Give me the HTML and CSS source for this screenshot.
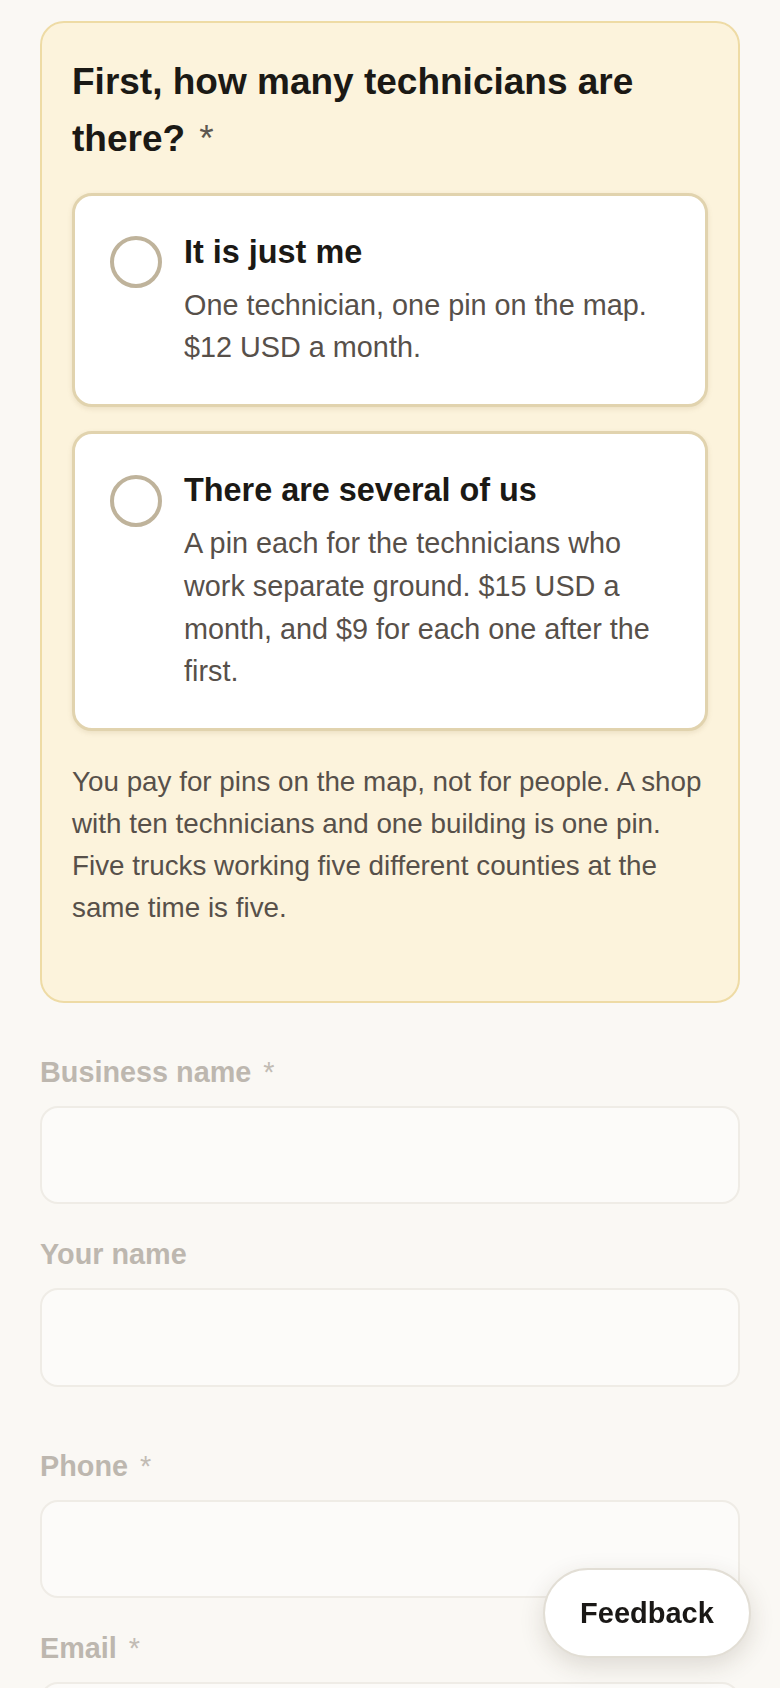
FILE: index.html
```html
<!DOCTYPE html>
<html lang="en">
<head>
<meta charset="utf-8">
<title>Sign up</title>
<link rel="stylesheet" href="styles.css">
</head>
<body>
<main class="page">
  <section class="question">
    <h2 class="q-title">First, how many technicians are there? <span class="req">*</span></h2>
    <div class="options">
      <label class="option">
        <span class="radio"></span>
        <span class="opt-text">
          <span class="opt-title">It is just me</span>
          <span class="opt-desc">One technician, one pin on the map. $12 USD a month.</span>
        </span>
      </label>
      <label class="option">
        <span class="radio"></span>
        <span class="opt-text">
          <span class="opt-title">There are several of us</span>
          <span class="opt-desc">A pin each for the technicians who work separate ground. $15 USD a month, and $9 for each one after the first.</span>
        </span>
      </label>
    </div>
    <p class="help">You pay for pins on the map, not for people. A shop with ten technicians and one building is one pin. Five trucks working five different counties at the same time is five.</p>
  </section>

  <div class="field field-first">
    <label class="label">Business name <span class="req-l">*</span></label>
    <input class="input" type="text">
  </div>
  <div class="field">
    <label class="label">Your name</label>
    <input class="input" type="text">
  </div>
  <div class="field field-spaced">
    <label class="label">Phone <span class="req-l">*</span></label>
    <input class="input" type="text">
  </div>
  <div class="field">
    <label class="label">Email <span class="req-l">*</span></label>
    <input class="input" type="text">
  </div>
</main>
<button class="feedback" type="button">Feedback</button>
</body>
</html>
```

FILE: styles.css
```css
html, body {
  margin: 0;
  background: #faf8f4;
  font-family: "Liberation Sans", Arial, sans-serif;
}

.page {
  padding: 20.5px 40px 60px;
}

.question {
  background: #fcf3dc;
  border: 2px solid #eedba5;
  border-radius: 24px;
  padding: 30px 30px 72px;
}

.q-title {
  margin: 0;
  font-size: 37px;
  line-height: 57px;
  font-weight: 700;
  color: #1b1915;
}

.req {
  font-weight: 400;
  color: #5e5851;
  margin-left: 4px;
}

.options {
  margin-top: 26px;
  display: flex;
  flex-direction: column;
  gap: 24px;
}

.option {
  display: flex;
  align-items: flex-start;
  gap: 22px;
  background: #ffffff;
  border: 3px solid #e1d3ae;
  border-radius: 20px;
  padding: 35px;
  box-shadow: 0 2px 5px rgba(140, 115, 60, 0.15);
}

.radio {
  flex: none;
  width: 52px;
  height: 52px;
  box-sizing: border-box;
  border: 4px solid #bfb39b;
  border-radius: 50%;
  margin-top: 5.5px;
}

.opt-text {
  display: block;
  min-width: 0;
}

.opt-title {
  display: block;
  font-size: 32.4px;
  line-height: 42px;
  font-weight: 700;
  color: #1b1915;
}

.opt-desc {
  display: block;
  margin-top: 11px;
  font-size: 28.8px;
  line-height: 42.8px;
  color: #57504a;
}

.help {
  margin: 30px -6px 0 0;
  font-size: 27.8px;
  line-height: 42px;
  color: #57504a;
}

.field {
  margin-top: 29px;
}

.field-first {
  margin-top: 47.4px;
}

.field-spaced {
  margin-top: 58px;
}

.label {
  display: block;
  font-size: 28.8px;
  line-height: 42px;
  font-weight: 700;
  color: #bdb7af;
}

.req-l {
  font-weight: 400;
  color: #c2bcb4;
  margin-left: 4px;
}

.input {
  display: block;
  width: 100%;
  box-sizing: border-box;
  margin-top: 13px;
  height: 98.5px;
  border: 2px solid #efece6;
  border-radius: 18px;
  background: #fcfbf9;
  font: inherit;
  outline: none;
}

.feedback {
  position: fixed;
  right: 29px;
  bottom: 30px;
  width: 208px;
  height: 90px;
  border: 2px solid #e2ded5;
  border-radius: 45px;
  background: #ffffff;
  font-family: "Liberation Sans", Arial, sans-serif;
  font-size: 29px;
  font-weight: 700;
  color: #1a1816;
  box-shadow: 0 8px 24px rgba(60, 50, 30, 0.15);
  cursor: pointer;
}
```
